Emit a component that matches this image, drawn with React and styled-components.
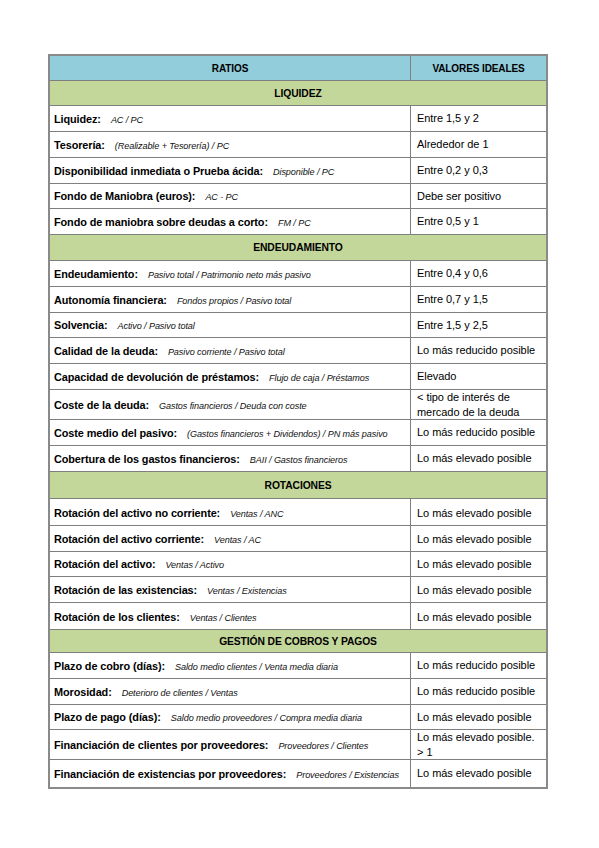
import React from "react";
import styled, { createGlobalStyle } from "styled-components";

const GlobalStyle = createGlobalStyle`
  html, body { margin: 0; padding: 0; background: #ffffff; }
  body { font-family: "Liberation Sans", Arial, sans-serif; color: #000; }
`;

const Page = styled.div`
  padding: 54px 0 40px 48px;
`;

const Table = styled.div`
  width: 500px;
  box-sizing: border-box;
  border: 2px solid #8a8a8a;
  display: flex;
  flex-direction: column;
`;

const Row = styled.div`
  box-sizing: border-box;
  display: grid;
  grid-template-columns: ${(p) => (p.$full ? "1fr" : "361px 1fr")};
  height: ${(p) => p.$h}px;
  background: ${(p) => p.$bg || "#ffffff"};
  border-bottom: 1px solid #7f7f7f;
  &:last-child { border-bottom: none; }
`;

const Cell = styled.div`
  box-sizing: border-box;
  display: flex;
  align-items: ${(p) => (p.$end ? "flex-end" : "center")};
  justify-content: ${(p) => (p.$center ? "center" : "flex-start")};
  padding: ${(p) => (p.$end ? "0 6px 4px 6px" : "0 6px")};
  border-right: ${(p) => (p.$divider ? "1px solid #7f7f7f" : "none")};
  min-width: 0;
`;

const LabelCell = styled(Cell)`
  padding-left: 4px;
  white-space: nowrap;
`;

const LabelLine = styled.div`
  line-height: 14px;
`;

const HeadText = styled.span`
  font-weight: bold;
  font-size: 10px;
  letter-spacing: -0.1px;
`;

const SectionText = styled.span`
  font-weight: bold;
  font-size: 10.3px;
  letter-spacing: -0.1px;
`;

const Label = styled.span`
  font-weight: bold;
  font-size: 10.9px;
  letter-spacing: -0.1px;
`;

const Formula = styled.span`
  font-style: italic;
  font-size: 9.1px;
  letter-spacing: -0.1px;
  margin-left: 10px;
  color: #111;
`;

const Value = styled.span`
  font-size: 11px;
  line-height: 15px;
  letter-spacing: -0.05px;
`;

const GREEN = "#c4d79b";
const BLUE = "#92cddc";

const data = [
  { section: "LIQUIDEZ", h: 25 },
  { l: "Liquidez:", f: "AC / PC", v: "Entre 1,5 y 2", h: 26 },
  { l: "Tesorería:", f: "(Realizable + Tesorería) / PC", v: "Alrededor de 1", h: 26 },
  { l: "Disponibilidad inmediata o Prueba ácida:", f: "Disponible / PC", v: "Entre 0,2 y 0,3", h: 26 },
  { l: "Fondo de Maniobra (euros):", f: "AC - PC", v: "Debe ser positivo", h: 25 },
  { l: "Fondo de maniobra sobre deudas a corto:", f: "FM / PC", v: "Entre 0,5 y 1", h: 26 },
  { section: "ENDEUDAMIENTO", h: 26 },
  { l: "Endeudamiento:", f: "Pasivo total / Patrimonio neto más pasivo", v: "Entre 0,4 y 0,6", h: 26 },
  { l: "Autonomía financiera:", f: "Fondos propios / Pasivo total", v: "Entre 0,7 y 1,5", h: 26 },
  { l: "Solvencia:", f: "Activo / Pasivo total", v: "Entre 1,5 y 2,5", h: 25 },
  { l: "Calidad de la deuda:", f: "Pasivo corriente / Pasivo total", v: "Lo más reducido posible", h: 26 },
  { l: "Capacidad de devolución de préstamos:", f: "Flujo de caja / Préstamos", v: "Elevado", h: 26 },
  { l: "Coste de la deuda:", f: "Gastos financieros / Deuda con coste", v: ["< tipo de interés de", "mercado de la deuda"], h: 30 },
  { l: "Coste medio del pasivo:", f: "(Gastos financieros + Dividendos) / PN más pasivo", v: "Lo más reducido posible", h: 26 },
  { l: "Cobertura de los gastos financieros:", f: "BAII / Gastos financieros", v: "Lo más elevado posible", h: 26 },
  { section: "ROTACIONES", h: 27 },
  { l: "Rotación del activo no corriente:", f: "Ventas / ANC", v: "Lo más elevado posible", h: 27, end: true },
  { l: "Rotación del activo corriente:", f: "Ventas / AC", v: "Lo más elevado posible", h: 26, end: true },
  { l: "Rotación del activo:", f: "Ventas / Activo", v: "Lo más elevado posible", h: 25, end: true },
  { l: "Rotación de las existencias:", f: "Ventas / Existencias", v: "Lo más elevado posible", h: 26, end: true },
  { l: "Rotación de los clientes:", f: "Ventas / Clientes", v: "Lo más elevado posible", h: 27, end: true },
  { section: "GESTIÓN DE COBROS Y PAGOS", h: 23 },
  { l: "Plazo de cobro (días):", f: "Saldo medio clientes / Venta media diaria", v: "Lo más reducido posible", h: 26 },
  { l: "Morosidad:", f: "Deterioro de clientes / Ventas", v: "Lo más reducido posible", h: 26 },
  { l: "Plazo de pago (días):", f: "Saldo medio proveedores / Compra media diaria", v: "Lo más elevado posible", h: 25 },
  { l: "Financiación de clientes por proveedores:", f: "Proveedores / Clientes", v: ["Lo más elevado posible.", "> 1"], h: 30 },
  { l: "Financiación de existencias por proveedores:", f: "Proveedores / Existencias", v: "Lo más elevado posible", h: 27 },
];

function renderValue(v) {
  if (Array.isArray(v)) {
    return (
      <Value>
        {v[0]}
        <br />
        {v[1]}
      </Value>
    );
  }
  return <Value>{v}</Value>;
}

export default function App() {
  return (
    <>
      <GlobalStyle />
      <Page>
        <Table>
          <Row $h={25} $bg={BLUE}>
            <Cell $center $divider>
              <HeadText>RATIOS</HeadText>
            </Cell>
            <Cell $center>
              <HeadText>VALORES IDEALES</HeadText>
            </Cell>
          </Row>
          {data.map((r, i) =>
            r.section ? (
              <Row key={i} $h={r.h} $bg={GREEN} $full>
                <Cell $center>
                  <SectionText>{r.section}</SectionText>
                </Cell>
              </Row>
            ) : (
              <Row key={i} $h={r.h}>
                <LabelCell $divider $end={r.end}>
                  <LabelLine>
                    <Label>{r.l}</Label>
                    <Formula>{r.f}</Formula>
                  </LabelLine>
                </LabelCell>
                <Cell $end={r.end}>{renderValue(r.v)}</Cell>
              </Row>
            )
          )}
        </Table>
      </Page>
    </>
  );
}
